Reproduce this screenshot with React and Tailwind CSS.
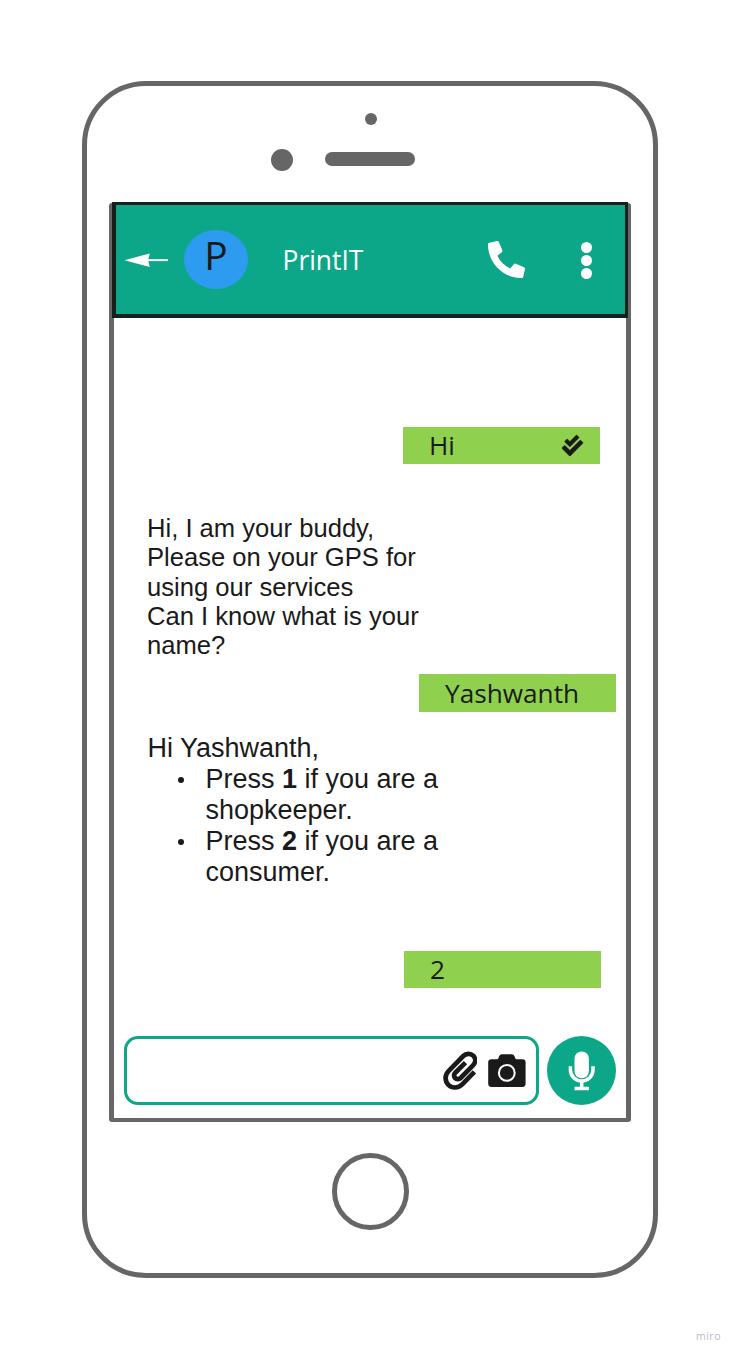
import { FaCheckDouble, FaPhone } from "react-icons/fa";

function BackArrow() {
  return (
    <svg viewBox="0 0 44 16" className="h-4 w-11 shrink-0" aria-hidden="true">
      <path d="M0.4 8.2 L25.8 1.4 L24 8.2 L25.8 15 Z" fill="#fff" />
      <rect x="23" y="7.2" width="21" height="1.9" fill="#fff" />
    </svg>
  );
}

function PaperclipIcon() {
  return (
    <svg viewBox="0 0 34 39" className="mr-[11px] h-[39px] w-[34px] shrink-0" aria-hidden="true">
      <path
        d="M31.4 20.8L19.2 33.4C15.3 37.3 9.2 37.6 5.4 33.9C1.6 30 1.7 24 5.5 20.1L20.3 5C23.2 2.1 27.6 2.1 30.2 4.7C32.8 7.3 32.8 11.5 30 14.4L17.9 26.7C16.1 28.4 13.6 28.5 12.1 27C10.6 25.4 10.8 23.2 12.5 21.5L22.5 11.6"
        fill="none"
        stroke="#1a1a1a"
        strokeWidth="4.7"
      />
    </svg>
  );
}

function CameraIcon() {
  return (
    <svg viewBox="0 0 38 34" className="h-[34px] w-[38px] shrink-0" aria-hidden="true">
      <path
        d="M3.5 5.2H9.2Q10.2 5.2 10.5 4.1L11 2.6Q11.8 0.2 14 0.2H23.6Q25.8 0.2 26.6 2.6L27.1 4.1Q27.4 5.2 28.4 5.2H34.5Q37.6 5.2 37.6 8.3V29.8Q37.6 32.9 34.5 32.9H3.5Q0.2 32.9 0.2 29.8V8.3Q0.2 5.2 3.5 5.2Z"
        fill="#1a1a1a"
      />
      <circle cx="18.8" cy="18.9" r="7.9" fill="none" stroke="#fff" strokeWidth="2" />
    </svg>
  );
}

function MicIcon() {
  return (
    <svg viewBox="0 0 28 40" className="h-10 w-7" aria-hidden="true">
      <rect x="6.5" y="0.5" width="14.4" height="26.8" rx="7.2" fill="#fff" />
      <path d="M2.4 15.2V18.8A11.3 11.3 0 0 0 25 18.8V15.2" fill="none" stroke="#fff" strokeWidth="3.5" />
      <path d="M13.7 30V37M6.5 37.6H20.9" fill="none" stroke="#fff" strokeWidth="3.5" />
    </svg>
  );
}

function Sent({ className, children }) {
  return (
    <div
      className={`flex w-[197px] shrink-0 items-center justify-between bg-[#8fd14f] pr-[17px] pl-[26px] font-['Open_Sans',sans-serif] text-[26.2px] leading-9 ${className}`}
    >
      {children}
    </div>
  );
}

function Option({ digit, role }) {
  return (
    <li className="flex">
      <span className="mt-3 mr-[21px] ml-[30px] flex h-[9px] w-[7px] shrink-0 items-center">
        <span className="size-1.5 rounded-full bg-[#1a1a1a]" />
      </span>
      <span>
        Press <b>{digit}</b> if you are a<br />
        {role}.
      </span>
    </li>
  );
}

export default function App() {
  return (
    <div className="flex h-[1356px] w-[736px] flex-col bg-white pt-[81px] text-[#1a1a1a]">
      <div className="ml-[82px] flex h-[1197px] w-[576px] shrink-0 flex-col rounded-[64px] border-5 border-[#666]">
        <div className="flex h-[117px] shrink-0 flex-col">
          <div className="mt-[27px] ml-[278px] size-3 rounded-full bg-[#666]" />
          <div className="mt-[23px] ml-[184px] flex items-center">
            <div className="mt-px size-[22px] rounded-full bg-[#666]" />
            <div className="-mt-px ml-8 h-[14px] w-[90px] rounded-full bg-[#666]" />
          </div>
        </div>

        <main className="ml-[22px] flex h-[919px] w-[522px] shrink-0 flex-col rounded-[3px] border-5 border-b-4 border-[#666]">
          <header className="-mt-1.5 -ml-0.5 flex h-[116px] w-[516px] shrink-0 items-center border-3 border-b-4 border-l-4 border-[#15201d] bg-[#0ca789] pl-2 font-['Open_Sans',sans-serif]">
            <BackArrow />
            <div className="ml-4 flex h-[59px] w-[64px] shrink-0 items-center justify-center rounded-[50%] bg-[#2d9bf0] pb-[11px] text-[39px] leading-none">
              P
            </div>
            <h1 className="ml-[34.5px] w-[205.5px] shrink-0 text-[26.4px] leading-9 text-white">PrintIT</h1>
            <FaPhone className="size-[37px] shrink-0 -scale-x-100 text-white" />
            <div className="mt-px ml-[55.5px] flex flex-col gap-0.5">
              <span className="size-[11px] rounded-full bg-white" />
              <span className="size-[11px] rounded-full bg-white" />
              <span className="size-[11px] rounded-full bg-white" />
            </div>
          </header>

          <Sent className="mt-[109px] ml-[289px] h-[37px]">
            <span className="-mt-0.5">Hi</span>
            <FaCheckDouble className="size-[21px] overflow-visible stroke-current stroke-[8px]" />
          </Sent>

          <p className="mt-[50px] ml-[33px] shrink-0 font-['Liberation_Sans',sans-serif] text-[25.6px] leading-[29.3px]">
            Hi, I am your buddy,
            <br />
            Please on your GPS for
            <br />
            using our services
            <br />
            Can I know what is your
            <br />
            name?
          </p>

          <Sent className="mt-[13.5px] ml-[305px] h-[38px]">
            <span>Yashwanth</span>
          </Sent>

          <div className="mt-[21px] ml-[33.5px] shrink-0 font-['Liberation_Sans',sans-serif] text-[27px] leading-[31px]">
            <p>Hi Yashwanth,</p>
            <ul>
              <Option digit="1" role="shopkeeper" />
              <Option digit="2" role="consumer" />
            </ul>
          </div>

          <Sent className="mt-[63px] ml-[290px] h-[37px]">
            <span>2</span>
          </Sent>

          <div className="mt-auto mb-[13px] ml-[10px] flex shrink-0 items-center">
            <div className="flex h-[69px] w-[415px] items-center justify-end rounded-[14px] border-3 border-[#0ca789] pr-2.5">
              <PaperclipIcon />
              <CameraIcon />
            </div>
            <div className="ml-2 flex size-[69px] items-center justify-center rounded-full bg-[#0ca789]">
              <MicIcon />
            </div>
          </div>
        </main>

        <div className="mt-[31px] ml-[245px] size-[77px] shrink-0 rounded-full border-5 border-[#666]" />
      </div>
      <div className="mt-[51px] ml-[696px] font-['Open_Sans',sans-serif] text-[10.5px] leading-[14px] tracking-[0.5px] text-[#b9bcc8]">
        miro
      </div>
    </div>
  );
}
